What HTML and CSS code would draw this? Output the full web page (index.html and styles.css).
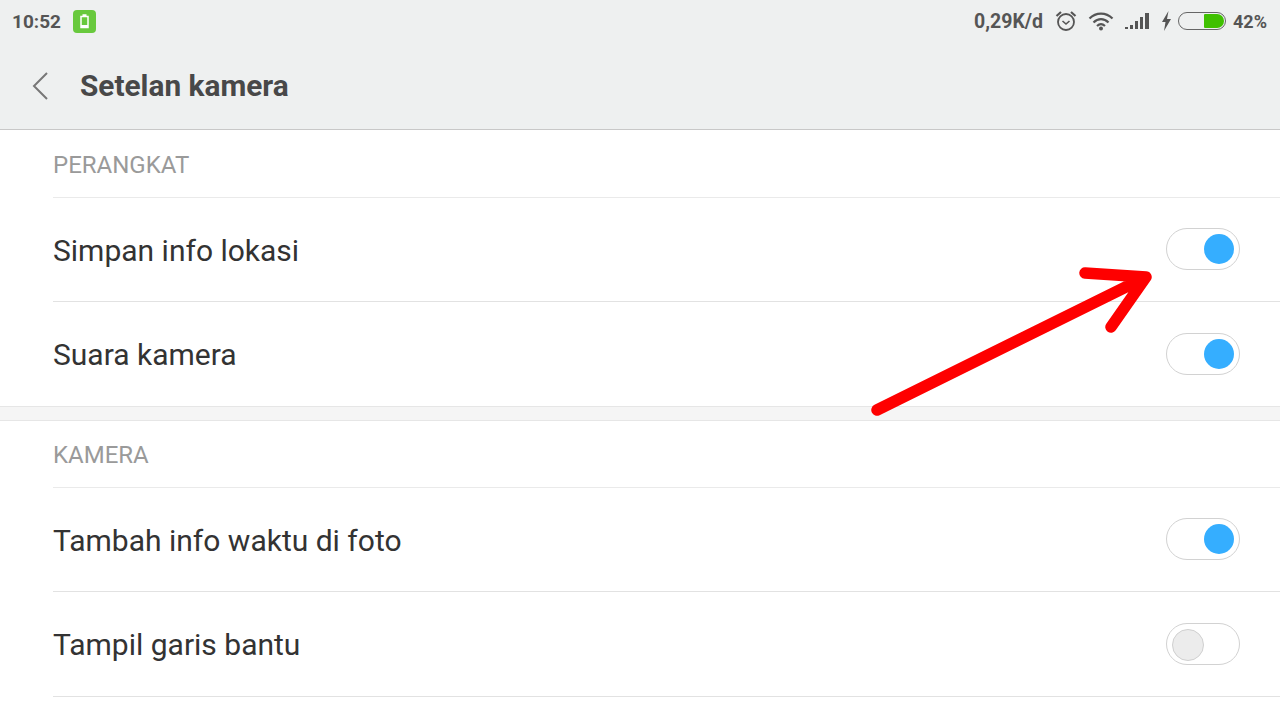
FILE: index.html
```html
<!DOCTYPE html>
<html lang="id">
<head>
<meta charset="utf-8">
<title>Setelan kamera</title>
<link rel="stylesheet" href="styles.css">
</head>
<body>
<div class="screen">
  <header class="top">
    <div class="status">
      <div class="status-left">
        <span class="time">10:52</span>
        <span class="badge">
          <svg width="23" height="23" viewBox="0 0 23 23"><path d="M9.500 5h4M8 6.500h7v11H8z" fill="none" stroke="#fff" stroke-width="1.500"/><path d="M8 15h7v2.500H8z" fill="#fff"/></svg>
        </span>
      </div>
      <div class="status-right">
        <span class="speed">0,29K/d</span>
        <svg class="ic-alarm" width="22" height="22" viewBox="0 0 22 22"><circle cx="11" cy="12" r="8" fill="none" stroke="#555" stroke-width="1.800"/><path d="M7.500 11l3.500 3 3.500-3" fill="none" stroke="#555" stroke-width="1.600"/><path d="M1.500 6L6 2M20.500 6L16 2" stroke="#555" stroke-width="2.200" fill="none"/></svg>
        <svg class="ic-wifi" width="26" height="20" viewBox="0 0 26 20"><path d="M1.500 7.500C8 1 18 1 24.500 7.500M5.500 11.500C10 7 16 7 20.500 11.500M9 15C11.500 12.700 14.500 12.700 17 15" fill="none" stroke="#555" stroke-width="2.200"/><circle cx="13" cy="17.500" r="2" fill="#555"/></svg>
        <svg class="ic-signal" width="25" height="18" viewBox="0 0 25 18"><path d="M0 15h3v2H0zM5 13h3v4H5zM10 9h3v8h-3zM15 5h3v12h-3zM20 1h4v16h-4z" fill="#555"/></svg>
        <svg class="ic-bolt" width="11" height="20" viewBox="0 0 11 20"><path d="M7.500 0L1 11h3.500L3 20l7-12H6z" fill="#555"/></svg>
        <span class="battery"><span class="battery-fill"></span></span>
        <span class="pct">42%</span>
      </div>
    </div>
    <div class="titlebar">
      <svg class="back" width="18" height="30" viewBox="0 0 18 30"><path d="M16 2L3 15l13 13" fill="none" stroke="#777" stroke-width="2"/></svg>
      <h1 class="title">Setelan kamera</h1>
    </div>
  </header>

  <section class="group">
    <div class="group-head">PERANGKAT</div>
    <div class="row"><span class="label">Simpan info lokasi</span><span class="switch on"></span></div>
    <div class="row"><span class="label">Suara kamera</span><span class="switch on"></span></div>
  </section>
  <div class="divider"></div>
  <section class="group">
    <div class="group-head second">KAMERA</div>
    <div class="row"><span class="label">Tambah info waktu di foto</span><span class="switch on"></span></div>
    <div class="row"><span class="label">Tampil garis bantu</span><span class="switch"></span></div>
  </section>

  <svg class="arrow" width="1280" height="720" viewBox="0 0 1280 720"><path d="M877 410L1146 277M1085 273L1146 277L1111 327" fill="none" stroke="#fe0000" stroke-width="11.500" stroke-linecap="round" stroke-linejoin="round"/></svg>
</div>
</body>
</html>
```

FILE: styles.css
```css
* { box-sizing: border-box; }
html, body { margin: 0; padding: 0; }
body { background: #fff; font-family: Roboto, "Liberation Sans", sans-serif; }
.screen { position: relative; width: 1280px; height: 720px; overflow: hidden; background: #fff; }

.top { height: 130px; background: #eef0f0; border-bottom: 1px solid #c8c8c8; }
.status { height: 42px; padding: 0 13px 0 12px; display: flex; justify-content: space-between; align-items: center; color: #555; font-weight: 700; font-size: 18px; }
.status-left, .status-right { display: flex; align-items: center; }
.time { font-size: 19px; }
.speed { font-size: 19.500px; }
.badge { width: 23px; height: 23px; margin-left: 12px; border-radius: 4px; background: #68c93d; display: flex; }
.ic-alarm { margin-left: 12px; }
.ic-wifi { margin-left: 11px; }
.ic-signal { margin-left: 11px; }
.ic-bolt { margin-left: 11px; }
.battery { width: 48px; height: 18px; margin-left: 6px; border: 1.500px solid #666; border-radius: 9px; padding: 1px 1px 1px 2px; display: flex; justify-content: flex-end; }
.battery-fill { width: 20px; height: 100%; background: #3fc000; border-radius: 1px 7px 7px 1px; }
.pct { margin-left: 7px; }

.titlebar { height: 87px; display: flex; align-items: center; padding-left: 31px; }
.back { flex: none; }
.title { margin: 0 0 0 31px; font-size: 29.800px; font-weight: 700; color: #484848; }

.group { padding-left: 53px; }
.group-head { height: 68px; display: flex; align-items: center; font-size: 24px; color: #9a9a9a; border-bottom: 1px solid #eaeaea; padding-top: 2px; }
.group-head.second { height: 67px; }
.row { height: 104px; padding-right: 40px; display: flex; justify-content: space-between; align-items: center; border-bottom: 1px solid #e2e2e2; }
.group:last-of-type .row:last-child { height: 105px; }
.label { font-size: 30px; color: #333; padding-top: 1px; }
.group:first-of-type .row:last-child { border-bottom: 0; }

.divider { height: 15px; background: #f5f5f5; border-top: 1px solid #e6e6e6; border-bottom: 1px solid #e6e6e6; }

.switch { position: relative; width: 74px; height: 42px; margin-top: -1px; border: 1px solid #d2d2d2; border-radius: 21px; background: #fff; }
.switch::after { content: ""; position: absolute; top: 5px; left: 5px; width: 30px; height: 30px; border-radius: 50%; background: #ececec; border: 1px solid #d0d0d0; }
.switch.on::after { left: auto; right: 5px; background: #35aeff; border: 0; }

.arrow { position: absolute; inset: 0; pointer-events: none; }
```
